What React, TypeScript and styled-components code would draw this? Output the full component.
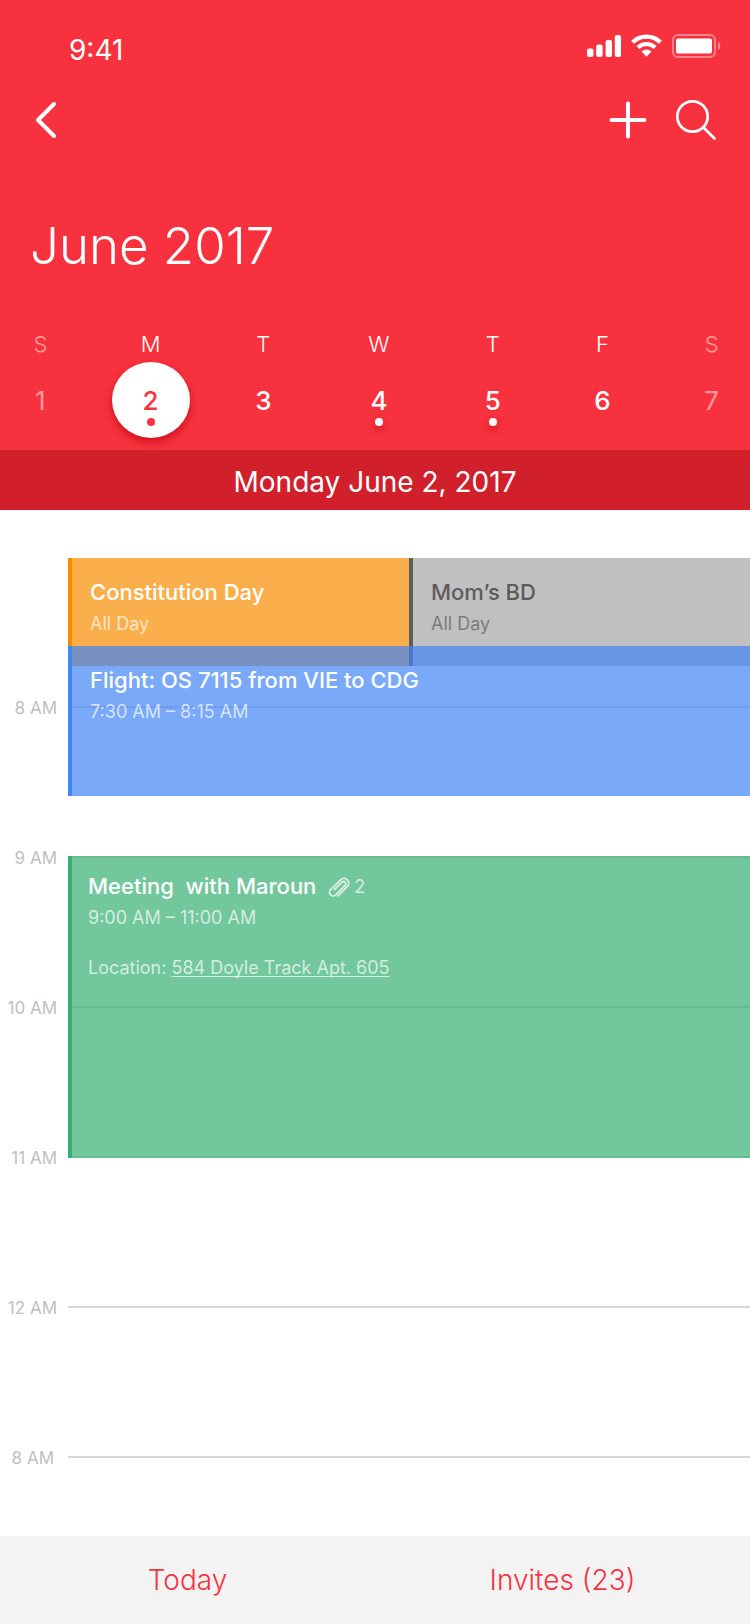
import React from "react";
import styled, { createGlobalStyle, css } from "styled-components";

const ACCENT = "#f7323e";

const GlobalStyle = createGlobalStyle`
  *, *::before, *::after { box-sizing: border-box; }
  body {
    margin: 0;
    background: #ffffff;
    font-family: Inter, "Liberation Sans", sans-serif;
  }
  button {
    padding: 0;
    border: 0;
    background: none;
    color: inherit;
    font: inherit;
    cursor: pointer;
  }
`;

const Screen = styled.div`
  display: flex;
  flex-direction: column;
  min-height: 100vh;
`;

const Header = styled.header`
  overflow: hidden;
  padding-bottom: 12px;
  background: ${ACCENT};
  color: #ffffff;
`;

const StatusBar = styled.div`
  display: flex;
  justify-content: space-between;
  align-items: flex-start;
  padding: 34px 29px 0 69px;
`;

const Clock = styled.time`
  font-size: 28px;
  line-height: 32px;
`;

const StatusIcons = styled.div`
  display: flex;
  gap: 10px;

  svg { display: block; }
`;

const NavBar = styled.nav`
  display: flex;
  justify-content: space-between;
  padding: 30px 30px 0 28px;
`;

const NavActions = styled.div`
  display: flex;
  gap: 20px;
`;

const IconButton = styled.button`
  width: 48px;
  height: 48px;

  svg {
    display: block;
    fill: none;
    stroke: currentColor;
    stroke-linecap: round;
    stroke-linejoin: round;
  }
`;

const MonthTitle = styled.h1`
  margin: 0;
  padding: 72px 30px 0;
  font-size: 51px;
  font-weight: 300;
  line-height: 60px;
`;

/* The outer days sit close to the screen edges, so the week bleeds past them. */
const Week = styled.ul`
  display: grid;
  grid-template-columns: 109fr 112fr 114fr 118fr 110fr 110fr 109fr;
  margin: 54px -16px 0 -14px;
  padding: 0;
  list-style: none;
`;

const Day = styled.li<{ $muted?: boolean }>`
  display: flex;
  flex-direction: column;
  align-items: center;
  gap: 4px;
  opacity: ${(p) => (p.$muted ? 0.5 : 1)};
`;

const DayName = styled.span`
  font-size: 22px;
  font-weight: 300;
  line-height: 28px;
`;

const DayButton = styled.button<{ $selected?: boolean; $muted?: boolean }>`
  position: relative;
  width: 78px;
  height: 76px;
  padding-top: 2px;
  border-radius: 50%;
  font-size: 26px;
  font-weight: ${(p) => (p.$muted ? 400 : 500)};
  line-height: 32px;
  ${(p) =>
    p.$selected &&
    css`
      background: #ffffff;
      color: ${ACCENT};
      box-shadow: 0 4px 8px rgba(190, 0, 10, 0.7);
    `}
`;

const EventDot = styled.span<{ $selected?: boolean }>`
  position: absolute;
  bottom: 12px;
  left: 50%;
  width: 8px;
  height: 8px;
  margin-left: -4px;
  border-radius: 50%;
  background: currentColor;
  box-shadow: ${(p) => (p.$selected ? "none" : "0 4px 8px rgba(190, 0, 10, 0.7)")};
`;

const DateBar = styled.h2`
  margin: 0;
  padding: 15px 0 11px;
  background: #d1202b;
  color: #ffffff;
  font-size: 28px;
  font-weight: 400;
  line-height: 34px;
  text-align: center;
`;

/* Every grid row is 2px tall, which makes 75 rows an hour. */
const Timeline = styled.main`
  display: grid;
  grid-template-columns: 68px 1fr 1fr;
  grid-template-rows: repeat(513, 2px);
  flex: 1;
`;

const HourLabel = styled.time<{ $row: number; $inset: number }>`
  grid-column: 1;
  grid-row: ${(p) => p.$row - 5} / span 12;
  padding-right: ${(p) => p.$inset}px;
  color: #c0c0c0;
  font-size: 17px;
  line-height: 24px;
  text-align: right;
  white-space: nowrap;
`;

const HourLine = styled.div<{ $row: number }>`
  grid-column: 2 / -1;
  grid-row: ${(p) => p.$row};
  background: #d6d6d6;
`;

type Tone = "orange" | "grey" | "blue" | "green";

const tones: Record<Tone, { bar: string; fill: string; title: string; text: string }> = {
  orange: { bar: "#fb8c00", fill: "rgba(250, 141, 0, 0.7)", title: "#ffffff", text: "rgba(255, 255, 255, 0.7)" },
  grey: { bar: "#5c5c5c", fill: "rgba(92, 92, 92, 0.39)", title: "#5c5c5c", text: "#7c7c7c" },
  blue: { bar: "#4285f4", fill: "rgba(66, 133, 244, 0.7)", title: "#ffffff", text: "rgba(255, 255, 255, 0.7)" },
  green: { bar: "#37af73", fill: "rgba(55, 175, 115, 0.7)", title: "#ffffff", text: "rgba(255, 255, 255, 0.7)" },
};

const EventBlock = styled.article<{ $tone: Tone; $row: number; $span: number; $column: string; $compact?: boolean }>`
  grid-column: ${(p) => p.$column};
  grid-row: ${(p) => p.$row} / span ${(p) => p.$span};
  padding: ${(p) => (p.$compact ? "16px 16px 0" : "20px 18px 0")};
  border-left: 4px solid ${(p) => tones[p.$tone].bar};
  background: ${(p) => tones[p.$tone].fill};
  background-clip: padding-box;
  color: ${(p) => tones[p.$tone].text};
  font-size: 18px;
  line-height: 24px;
`;

const EventTitle = styled.h3<{ $tone: Tone }>`
  margin: 0;
  color: ${(p) => tones[p.$tone].title};
  font-size: 22px;
  font-weight: 500;
  line-height: 28px;
  white-space: pre;
`;

const TitleRow = styled.div`
  display: flex;
  align-items: center;
  gap: 12px;
`;

const Attachments = styled.span`
  display: flex;
  align-items: center;
  gap: 4px;
  padding-top: 2px;
`;

const EventText = styled.p`
  margin: 6px 0 0;
`;

const Location = styled.p`
  margin: 26px 0 0;

  a {
    color: inherit;
    text-underline-offset: 2px;
    text-decoration-skip-ink: none;
  }
`;

const Footer = styled.footer`
  display: grid;
  grid-template-columns: 1fr 1fr;
  background: #f3f3f3;
`;

const FooterButton = styled.button`
  && {
    height: 88px;
    color: ${ACCENT};
    font-size: 28px;
    font-weight: 300;
    line-height: 36px;
  }
`;

const week = [
  { name: "S", date: 1, muted: true },
  { name: "M", date: 2, selected: true, dot: true },
  { name: "T", date: 3 },
  { name: "W", date: 4, dot: true },
  { name: "T", date: 5, dot: true },
  { name: "F", date: 6 },
  { name: "S", date: 7, muted: true },
];

const hours = [
  { label: "8 AM", row: 99, inset: 11 },
  { label: "9 AM", row: 174, inset: 11 },
  { label: "10 AM", row: 249, inset: 11 },
  { label: "11 AM", row: 324, inset: 11 },
  { label: "12 AM", row: 399, inset: 11 },
  { label: "8 AM", row: 474, inset: 14 },
];

const SignalIcon = () => (
  <svg width="35" height="24" viewBox="0 0 35 24" fill="#fff" aria-hidden="true">
    <rect x="1" y="14.500" width="6.400" height="8.500" rx="2" />
    <rect x="10.200" y="10.500" width="6.400" height="12.500" rx="2" />
    <rect x="19.600" y="6" width="6.400" height="17" rx="2" />
    <rect x="28.800" y="1" width="6.200" height="22" rx="2" />
  </svg>
);

const WifiIcon = () => (
  <svg width="31" height="24" viewBox="0 0 31 24" fill="none" stroke="#fff" aria-hidden="true">
    <path d="M1.600 8.300a19.700 19.700 0 0 1 27.800 0" strokeWidth="4.200" />
    <path d="M6.900 13.500a12.200 12.200 0 0 1 17.200 0" strokeWidth="4" />
    <path d="M10.600 17.500a7 7 0 0 1 9.800 0L15.500 22.700z" fill="#fff" stroke="none" />
  </svg>
);

const BatteryIcon = () => (
  <svg width="49" height="24" viewBox="0 0 49 24" aria-hidden="true">
    <rect x="1" y="1" width="42" height="22" rx="5" fill="none" stroke="#fff" strokeWidth="2" opacity="0.4" />
    <rect x="4" y="4.500" width="36" height="15" rx="2" fill="#fff" />
    <path d="M46 8c3 1.600 3 6.400 0 8z" fill="#fff" opacity="0.45" />
  </svg>
);

const PaperclipIcon = () => (
  <svg width="22" height="22" viewBox="0 0 22 22" fill="none" stroke="currentColor" strokeWidth="1.900" strokeLinecap="round" aria-hidden="true">
    <path d="M10 19.800 19.300 10.500a4.700 4.700 0 0 0-6.700-6.700L2.600 13.600a3.600 3.600 0 0 0 5.200 5.200L17 9.400a2.200 2.200 0 0 0-3.200-3.200L6.500 13.500" />
  </svg>
);

export default function App() {
  return (
    <Screen>
      <GlobalStyle />
      <Header>
        <StatusBar>
          <Clock>9:41</Clock>
          <StatusIcons>
            <SignalIcon />
            <WifiIcon />
            <BatteryIcon />
          </StatusIcons>
        </StatusBar>
        <NavBar>
          <IconButton aria-label="Back">
            <svg width="48" height="48" strokeWidth="4">
              <path d="M26 8 10 24l16 16" />
            </svg>
          </IconButton>
          <NavActions>
            <IconButton aria-label="Add event">
              <svg width="48" height="48" strokeWidth="4">
                <path d="M24 7.500v33M7.500 24h33" />
              </svg>
            </IconButton>
            <IconButton aria-label="Search">
              <svg width="48" height="48" strokeWidth="2.700">
                <circle cx="20.500" cy="20.500" r="15.200" />
                <path d="M31.500 31.500 42.500 42.500" />
              </svg>
            </IconButton>
          </NavActions>
        </NavBar>
        <MonthTitle>June 2017</MonthTitle>
        <Week>
          {week.map((day) => (
            <Day key={day.date} $muted={day.muted}>
              <DayName>{day.name}</DayName>
              <DayButton $selected={day.selected} $muted={day.muted}>
                {day.date}
                {day.dot && <EventDot $selected={day.selected} />}
              </DayButton>
            </Day>
          ))}
        </Week>
      </Header>
      <DateBar>Monday June 2, 2017</DateBar>
      <Timeline>
        {hours.map((hour) => (
          <React.Fragment key={hour.row}>
            <HourLabel $row={hour.row} $inset={hour.inset}>{hour.label}</HourLabel>
            <HourLine $row={hour.row} />
          </React.Fragment>
        ))}
        <EventBlock $tone="orange" $row={25} $span={54} $column="2">
          <EventTitle $tone="orange">Constitution Day</EventTitle>
          <EventText>All Day</EventText>
        </EventBlock>
        <EventBlock $tone="grey" $row={25} $span={54} $column="3">
          <EventTitle $tone="grey">Mom’s BD</EventTitle>
          <EventText>All Day</EventText>
        </EventBlock>
        <EventBlock $tone="blue" $row={69} $span={75} $column="2 / -1">
          <EventTitle $tone="blue">Flight: OS 7115 from VIE to CDG</EventTitle>
          <EventText>7:30 AM – 8:15 AM</EventText>
        </EventBlock>
        <EventBlock $tone="green" $row={174} $span={151} $column="2 / -1" $compact>
          <TitleRow>
            <EventTitle $tone="green">{"Meeting  with Maroun"}</EventTitle>
            <Attachments>
              <PaperclipIcon />2
            </Attachments>
          </TitleRow>
          <EventText>9:00 AM – 11:00 AM</EventText>
          <Location>
            Location: <a href="#location">584 Doyle Track Apt. 605</a>
          </Location>
        </EventBlock>
      </Timeline>
      <Footer>
        <FooterButton>Today</FooterButton>
        <FooterButton>Invites (23)</FooterButton>
      </Footer>
    </Screen>
  );
}
